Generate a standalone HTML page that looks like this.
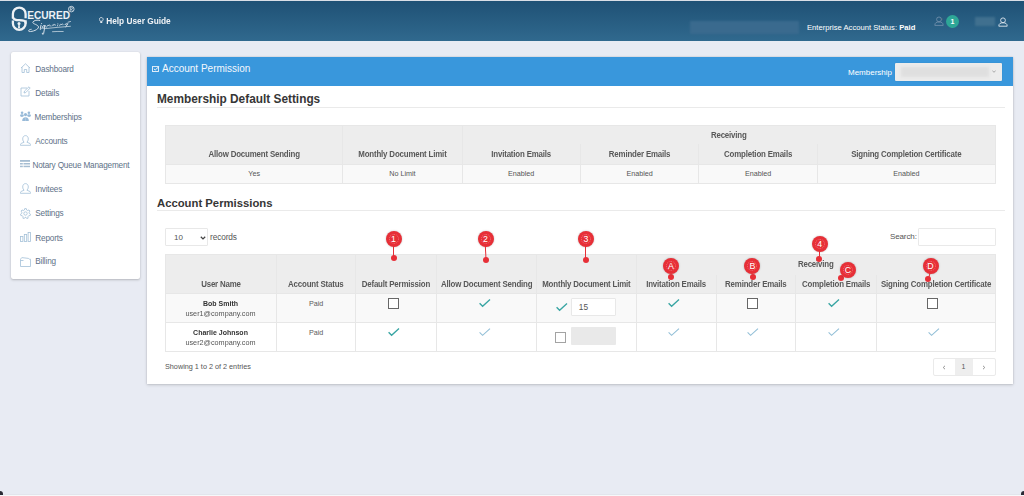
<!DOCTYPE html>
<html><head><meta charset="utf-8">
<style>
*{margin:0;padding:0;box-sizing:border-box}
html,body{width:1024px;height:496px;overflow:hidden}
body{background:#e8ebf3;font-family:"Liberation Sans",sans-serif;position:relative;color:#555}
.abs{position:absolute}
.hdr{left:0;top:0;width:1024px;height:41px;background:linear-gradient(#1f5175,#30698e);border-top:1px solid #d9dee6}
.wt{color:#fff;white-space:nowrap}
.side{left:11px;top:52px;width:129px;height:226.5px;background:#fff;border-radius:2px;box-shadow:0 1px 2.5px rgba(0,0,0,.22),0 0 1px rgba(0,0,0,.12)}
.mi{position:absolute;margin-top:0.8px;left:24.3px;font-size:8.2px;letter-spacing:-0.18px;color:#607187;white-space:nowrap}
.ico{position:absolute;left:9px}
.card{left:147px;top:57px;width:866px;height:327px;background:#fff;box-shadow:0 1px 3px rgba(0,0,0,.17),0 0 1.5px rgba(0,0,0,.14)}
.bar{left:0;top:0;width:866px;height:28.7px;background:#3997dc}
.h4{position:absolute;left:10px;font-weight:bold;color:#333;white-space:nowrap}
.uline{position:absolute;left:10px;width:848px;height:1px;background:#eaeaea}
table{border-collapse:collapse;position:absolute;table-layout:fixed}
td,th{border:1px solid #e7e7e7;text-align:center;white-space:nowrap;overflow:visible}
th{background:#ededed;font-weight:bold;color:#585858;font-size:7.9px;letter-spacing:-0.17px;vertical-align:bottom}
td{font-size:7.2px;color:#555;padding-bottom:0.8px}
.marker{position:absolute;width:16px;height:16px;border-radius:50%;background:#e72f37;color:#fff;font-size:8.8px;text-align:center;line-height:16.5px;box-shadow:0 0 2px rgba(0,0,0,.25)}
.marker:after{content:"";position:absolute;left:3px;top:3px;width:10px;height:10px;border-radius:50%;border:0.6px dotted rgba(255,255,255,.3);box-sizing:border-box}
.dot{position:absolute;width:6px;height:6px;border-radius:50%;background:#e72f37}
.stem{position:absolute;width:1.2px;background:#e72f37}
.t{display:inline-block;transform:scaleY(1.13);transform-origin:50% 80%}
.cb{position:absolute;width:11px;height:11px;border:1.5px solid #666;background:#fff}
</style></head><body>

<div class="abs" style="left:0;top:494px;width:1024px;height:1px;background:#e2e5ec"></div>
<div class="abs" style="left:0;top:495px;width:1024px;height:1px;background:#f7f8fa"></div>
<div class="abs" style="left:0;top:491px;width:3px;height:4px;background:#2a2a35;border-radius:0 3px 0 0;filter:blur(0.5px)"></div>
<div class="abs" style="left:1021px;top:491px;width:3px;height:4px;background:#2a2a35;border-radius:3px 0 0 0;filter:blur(0.5px)"></div>
<div class="abs" style="left:0;top:1px;width:3px;height:2px;background:#5a3a30;filter:blur(0.4px)"></div>
<!-- header -->
<div class="abs hdr"></div>

<!-- logo -->
<svg class="abs" style="left:8px;top:2px" width="72" height="36" viewBox="0 0 72 36">
  <g fill="none" stroke="#edf1f5" stroke-width="2.3">
    <path d="M4.9 16.5 V11.9 A6.35 6.35 0 0 1 17.6 11.9 V16.3"/>
    <path d="M17.6 18.2 V21.4 A6.35 6.35 0 0 1 4.9 21.4 V18.6"/>
    <path d="M5 15.2 C5.6 17.6 8 18.2 11 18.2 C15.5 18.2 17.6 18.6 17.6 21.5"/>
  </g>
  <circle cx="11" cy="21.6" r="1.5" fill="#edf1f5"/>
  <path d="M10.4 22 H11.6 L12 25.9 H10 Z" fill="#edf1f5"/>
  <text x="19.2" y="17.4" font-family="Liberation Sans" font-weight="bold" font-size="10.4" fill="#edf1f5" textLength="42.8" lengthAdjust="spacingAndGlyphs">ECURED</text>
  <circle cx="63.3" cy="7.1" r="2.8" fill="none" stroke="#e6ebf1" stroke-width="0.8"/>
  <path d="M62.4 8.9 V5.4 H63.6 A0.9 0.9 0 0 1 63.6 7.2 H62.4 M63.4 7.2 L64.3 8.9" fill="none" stroke="#e6ebf1" stroke-width="0.6"/>
  <g fill="none" stroke="#dde6ee" stroke-width="0.95" stroke-linecap="round">
    <path d="M31.8 18.4 C29.8 17.6 25.4 18.4 24.8 20.2 C24.3 22 30.4 22.6 30.5 25 C30.6 27.6 24.2 29.9 21.3 29.5 C19.6 29.1 21 27.4 23.2 27.3"/>
    <path d="M33 23.2 L32.2 27.2 C32.1 27.8 32.8 27.6 33.4 26.8"/>
    <path d="M37.2 23.6 C35.8 22.8 33.9 24.4 34.3 25.9 C34.7 27 36.2 26.4 37 23.6 L35.6 31.6 C35.3 33 33.9 32.6 34.3 31.2"/>
    <path stroke-width="0.75" d="M38.6 25.2 C39.6 22.6 40.6 22.4 40.4 24 C41.3 22.4 42.5 22.4 42.2 24.2 M44 24 C44.8 22 45.8 22 45.6 23.4 C46.4 21.8 47.5 21.8 47.3 23.4 M49.8 22.8 L49.4 24 M49.9 21.6 L50 21.7 M51.6 23.8 C52.4 21.6 53.4 21.4 53.2 23 C54 21.4 55.2 21.4 55 22.8 M57 22.4 C58 21 60 21 59.6 22.4 C59.2 23.6 57.4 23.6 57.6 22.4 M59.8 21.8 L57.8 25 M60 20.2 L62.5 19.5"/>
  </g>
  <circle cx="33.6" cy="21.5" r="0.55" fill="#dde6ee"/>
  <path d="M37 26.6 Q50 25.2 62.4 24.3 M44.5 29.7 Q50 29.3 55.2 29.5" stroke="#dde6ee" stroke-width="0.7" fill="none" stroke-linecap="round"/>
</svg>

<!-- help -->
<svg class="abs" style="left:99px;top:17.3px" width="4.5" height="6.5" viewBox="0 0 5 7"><path d="M2.5 0.5 A2 2 0 0 0 0.9 3.8 L1.4 4.6 H3.6 L4.1 3.8 A2 2 0 0 0 2.5 0.5 Z" fill="none" stroke="#f0f3f6" stroke-width="0.9"/><rect x="1.4" y="4.9" width="2.2" height="1.6" fill="#f0f3f6"/></svg>
<div class="abs wt" style="left:106.2px;top:16.3px;font-size:8.3px;font-weight:bold;color:#f0f3f6;transform:scaleY(1.08)">Help User Guide</div>

<!-- right header -->
<div class="abs" style="left:690px;top:20.5px;width:109px;height:13.5px;background:#3a6a8e;filter:blur(1.2px)"></div>
<div class="abs wt" style="left:807px;top:23px;font-size:7.65px">Enterprise Account Status: <b>Paid</b></div>
<svg class="abs" style="left:934px;top:16px" width="10" height="10" viewBox="0 0 10 10"><g fill="none" stroke="#7593ae" stroke-width="0.8"><circle cx="5" cy="3.4" r="2.4"/><path d="M0.8 9.4 C0.8 6.6 2.6 6 5 6 C7.4 6 9.2 6.6 9.2 9.4 Z"/></g><circle cx="8" cy="3" r="0.5" fill="#c08060" fill-opacity=".6"/></svg>
<div class="abs" style="left:946px;top:14.8px;width:13px;height:13px;border-radius:50%;background:#2ea797;color:#fff;font-size:7px;font-weight:bold;text-align:center;line-height:13px">1</div><div class="abs" style="left:951px;top:26.5px;width:0;height:0;border-left:1.5px solid transparent;border-right:1.5px solid transparent;border-top:1.5px solid #2ea797"></div>
<div class="abs" style="left:975px;top:17px;width:20px;height:9px;background:#40708f;filter:blur(1px)"></div>
<svg class="abs" style="left:997.5px;top:17px" width="10" height="10" viewBox="0 0 10 10"><g fill="none" stroke="#dfe6ee" stroke-width="0.9"><circle cx="5" cy="3.3" r="2.4"/><path d="M0.8 9.2 C0.8 6.4 2.6 5.8 5 5.8 C7.4 5.8 9.2 6.4 9.2 9.2 Z"/></g></svg>

<!-- sidebar -->
<div class="abs side">
  <svg class="ico" style="top:11px" width="11" height="10" viewBox="0 0 11 10"><path d="M1 5 L5.5 0.8 L10 5 M2 4.2 V9.5 H4.3 V6.5 H6.7 V9.5 H9 V4.2" fill="none" stroke="#a3c0d8" stroke-width="0.8"/></svg>
  <div class="mi" style="top:12px">Dashboard</div>
  <svg class="ico" style="top:34px" width="11" height="11" viewBox="0 0 11 11"><path d="M7 2 H1 V10 H9 V5 M4 7 L4.5 5 L9 0.8 L10.2 2 L5.8 6.5 Z" fill="none" stroke="#a3c0d8" stroke-width="0.8"/></svg>
  <div class="mi" style="top:36px">Details</div>
  <svg class="ico" style="top:58.7px;left:8.6px" width="11" height="10.5" viewBox="0 0 11 10.5"><g fill="#98bad8"><circle cx="2.1" cy="1.8" r="1.3"/><circle cx="8.9" cy="1.8" r="1.3"/><ellipse cx="1.9" cy="4.6" rx="1.9" ry="1.3"/><ellipse cx="9.1" cy="4.6" rx="1.9" ry="1.3"/><circle cx="5.5" cy="3.6" r="1.6"/><path d="M2.2 10.2 Q2 6.2 5.5 6.2 Q9 6.2 8.8 10.2 Z"/></g><g fill="none" stroke="#fff" stroke-width="0.35" stroke-opacity="0.6"><path d="M5.5 6.6 V10.2"/></g></svg>
  <div class="mi" style="top:60px;left:23.6px">Memberships</div>
  <svg class="ico" style="top:83px;left:9.2px" width="11" height="11" viewBox="0 0 11 11"><path d="M5.5 0.6 C3.6 0.6 2.7 2.2 2.7 4 C2.7 5.5 3.3 6.6 4.1 7.2 L1 8.5 C0.6 8.7 0.4 9.1 0.4 9.6 V10.3 H10.6 V9.6 C10.6 9.1 10.4 8.7 10 8.5 L6.9 7.2 C7.7 6.6 8.3 5.5 8.3 4 C8.3 2.2 7.4 0.6 5.5 0.6 Z" fill="none" stroke="#a3c0d8" stroke-width="0.8"/></svg>
  <div class="mi" style="top:84px">Accounts</div>
  <svg class="ico" style="top:108px;left:8.9px" width="10" height="8" viewBox="0 0 10 8"><g fill="#a6bdd2"><rect x="0" y="0" width="10" height="1.8"/><rect x="0" y="3" width="2.8" height="1.5"/><rect x="3.5" y="3" width="6.5" height="1.5"/><rect x="0" y="5.7" width="2.8" height="1.5"/><rect x="3.5" y="5.7" width="6.5" height="1.5"/></g></svg>
  <div class="mi" style="top:108px;left:21.5px">Notary Queue Management</div>
  <svg class="ico" style="top:131px;left:9.2px" width="11" height="11" viewBox="0 0 11 11"><path d="M5.5 0.6 C3.6 0.6 2.7 2.2 2.7 4 C2.7 5.5 3.3 6.6 4.1 7.2 L1 8.5 C0.6 8.7 0.4 9.1 0.4 9.6 V10.3 H10.6 V9.6 C10.6 9.1 10.4 8.7 10 8.5 L6.9 7.2 C7.7 6.6 8.3 5.5 8.3 4 C8.3 2.2 7.4 0.6 5.5 0.6 Z" fill="none" stroke="#a3c0d8" stroke-width="0.8"/></svg>
  <div class="mi" style="top:132px">Invitees</div>
  <svg class="ico" style="top:155.5px" width="11" height="11" viewBox="0 0 11 11"><g fill="none" stroke="#a3c0d8" stroke-width="0.8"><circle cx="5.5" cy="5.5" r="1.7"/><path d="M4.7 0.6 H6.3 L6.6 2 L7.8 2.6 L9 1.9 L9.9 3.1 L9.1 4.2 L9.3 5.5 L10.5 6.2 L10.1 7.6 L8.7 7.7 L7.9 8.8 L8.1 10.2 L6.7 10.5 L6 9.3 H5 L4.3 10.5 L2.9 10.2 L3.1 8.8 L2.3 7.7 L0.9 7.6 L0.5 6.2 L1.7 5.5 L1.9 4.2 L1.1 3.1 L2 1.9 L3.2 2.6 L4.4 2 Z"/></g></svg>
  <div class="mi" style="top:156px">Settings</div>
  <svg class="ico" style="top:180px" width="11" height="10" viewBox="0 0 11 10"><g fill="none" stroke="#a3c0d8" stroke-width="0.8"><rect x="0.5" y="4.5" width="2.4" height="5"/><rect x="4.3" y="2.5" width="2.4" height="7"/><rect x="8.1" y="0.5" width="2.4" height="9"/></g></svg>
  <div class="mi" style="top:181px">Reports</div>
  <svg class="ico" style="top:204.5px" width="11" height="10" viewBox="0 0 11 10"><g fill="none" stroke="#a3c0d8" stroke-width="0.8"><path d="M0.5 2.2 L1.8 0.6 L8.5 1.4 L9.2 2.2 H10.5 V9.5 H0.5 Z"/><path d="M0.5 3.5 H3.5"/></g></svg>
  <div class="mi" style="top:204.5px">Billing</div>
</div>

<!-- main card -->
<div class="abs card">
  <div class="abs bar"></div>
  <svg class="abs" style="left:5px;top:8.5px" width="8" height="6" viewBox="0 0 8 6"><rect x="0.5" y="0.6" width="6" height="4.9" fill="none" stroke="#f2f7fc" stroke-width="0.9"/><path d="M1.9 2.8 L3.2 4 L7.2 0.4" fill="none" stroke="#f2f7fc" stroke-width="1"/></svg>
  <div class="abs wt" style="left:15px;top:5.9px;font-size:10px;color:#f4f8fc">Account Permission</div>
  <div class="abs wt" style="left:701px;top:10.5px;font-size:8px">Membership</div>
  <div class="abs" style="left:748px;top:6px;width:107px;height:18px;background:#ececec;border-radius:1px;box-shadow:0 0 1px rgba(0,0,0,.2)"></div>
  <div class="abs" style="left:754px;top:10px;width:88px;height:10px;background:#dfdfdf;filter:blur(1.5px)"></div>
  <svg class="abs" style="left:845px;top:13px" width="4" height="3" viewBox="0 0 4 3"><path d="M0.3 0.5 L2 2.3 L3.7 0.5" fill="none" stroke="#999" stroke-width="0.8"/></svg>

  <div class="h4" style="top:34.5px;font-size:11.85px;color:#363636">Membership Default Settings</div>
  <div class="uline" style="top:50px"></div>

  <table style="left:18px;top:68px;width:830px">
    <colgroup><col style="width:177.3px"><col style="width:119.3px"><col style="width:118.2px"><col style="width:118.6px"><col style="width:118.4px"><col style="width:178.2px"></colgroup>
    <tr style="height:18px"><th rowspan="2" style="padding-bottom:5px"><span class="t">Allow Document Sending</span></th><th rowspan="2" style="padding-bottom:5px"><span class="t">Monthly Document Limit</span></th><th colspan="4" style="vertical-align:middle;border-bottom:none;padding-top:1.4px"><span class="t">Receiving</span></th></tr>
    <tr style="height:21px"><th style="border-top:none;padding-bottom:5px"><span class="t">Invitation Emails</span></th><th style="border-top:none;padding-bottom:5px"><span class="t">Reminder Emails</span></th><th style="border-top:none;padding-bottom:5px"><span class="t">Completion Emails</span></th><th style="border-top:none;padding-bottom:5px"><span class="t">Signing Completion Certificate</span></th></tr>
    <tr style="height:19px;background:#f9f9f9"><td>Yes</td><td>No Limit</td><td>Enabled</td><td>Enabled</td><td>Enabled</td><td>Enabled</td></tr>
  </table>

  <div class="h4" style="top:140px;font-size:11.3px;color:#363636">Account Permissions</div>
  <div class="uline" style="top:153px"></div>

  <div class="abs" style="left:18px;top:171px;width:43px;height:18px;border:1px solid #e8e8e8;border-radius:1px;background:#fff"></div>
  <div class="abs" style="left:27px;top:175.5px;font-size:8px;color:#555">10</div>
  <svg class="abs" style="left:52.5px;top:178.5px" width="6" height="4" viewBox="0 0 6 4"><path d="M0.8 0.8 L3 2.9 L5.2 0.8" fill="none" stroke="#444" stroke-width="1.3"/></svg>
  <div class="abs" style="left:63px;top:174.8px;font-size:8.3px;letter-spacing:-0.12px;color:#555">records</div>

  <div class="abs" style="left:743px;top:174.6px;font-size:8px;letter-spacing:-0.12px;color:#555">Search:</div>
  <div class="abs" style="left:771px;top:171.2px;width:77.6px;height:18.3px;border:1px solid #e9e9e9;border-radius:1px;background:#fff"></div>

  <table style="left:18px;top:197px;width:830px">
    <colgroup><col style="width:111px"><col style="width:78.6px"><col style="width:81.6px"><col style="width:100px"><col style="width:99.4px"><col style="width:80px"><col style="width:79.5px"><col style="width:81.2px"><col style="width:118.7px"></colgroup>
    <tr style="height:20px"><th rowspan="2" style="padding-bottom:4.3px"><span class="t">User Name</span></th><th rowspan="2" style="padding-bottom:4.3px"><span class="t">Account Status</span></th><th rowspan="2" style="padding-bottom:4.3px"><span class="t">Default Permission</span></th><th rowspan="2" style="padding-bottom:4.3px"><span class="t">Allow Document Sending</span></th><th rowspan="2" style="padding-bottom:4.3px"><span class="t">Monthly Document Limit</span></th><th colspan="4" style="border-bottom:none;vertical-align:bottom;padding-bottom:6px"><span class="t">Receiving</span></th></tr>
    <tr style="height:19px"><th style="border-top:none;padding-bottom:4.3px"><span class="t">Invitation Emails</span></th><th style="border-top:none;padding-bottom:4.3px"><span class="t">Reminder Emails</span></th><th style="border-top:none;padding-bottom:4.3px"><span class="t">Completion Emails</span></th><th style="border-top:none;padding-bottom:4.3px"><span class="t">Signing Completion Certificate</span></th></tr>
    <tr style="height:29px;background:#f9f9f9"><td></td><td></td><td></td><td></td><td></td><td></td><td></td><td></td><td></td></tr>
    <tr style="height:29px;background:#fff"><td></td><td></td><td></td><td></td><td></td><td></td><td></td><td></td><td></td></tr>
  </table>


  <!-- row content -->
  <div class="abs" style="left:18px;top:242.7px;width:111px;text-align:center;font-size:7px;font-weight:bold;color:#333;transform:scaleY(1.1)">Bob Smith</div>
  <div class="abs" style="left:18px;top:252px;width:111px;text-align:center;font-size:7.25px;color:#555;transform:scaleY(1.08)">user1@company.com</div>
  <div class="abs" style="left:18px;top:271.8px;width:111px;text-align:center;font-size:7px;font-weight:bold;color:#333;transform:scaleY(1.1)">Charlie Johnson</div>
  <div class="abs" style="left:18px;top:281.1px;width:111px;text-align:center;font-size:7.25px;color:#555;transform:scaleY(1.08)">user2@company.com</div>
  <div class="abs" style="left:129.9px;top:241.7px;width:78.6px;text-align:center;font-size:7.2px;color:#5c5c5c">Paid</div>
  <div class="abs" style="left:129.9px;top:270.5px;width:78.6px;text-align:center;font-size:7.2px;color:#5c5c5c">Paid</div>
  <div class="abs" style="left:18px;top:305.2px;font-size:7.25px;color:#555">Showing 1 to 2 of 2 entries</div>
</div>

<div class="abs" style="left:387.8px;top:298px;width:11px;height:11px;border:1.25px solid #676767;background:#fff"></div>
<svg class="abs" style="left:479px;top:298.5px" width="12" height="9" viewBox="0 0 12 9"><path d="M0.6 4.3 L3.6 7.3 L11 0.6" fill="none" stroke="#38a5a3" stroke-width="1.35"/></svg>
<svg class="abs" style="left:555.5px;top:303px" width="12" height="9" viewBox="0 0 12 9"><path d="M0.6 4.3 L3.6 7.3 L11 0.6" fill="none" stroke="#38a5a3" stroke-width="1.35"/></svg>
<div class="abs" style="left:570.8px;top:298.3px;width:45.3px;height:18px;background:#fff;border:1px solid #e8e8e8;border-radius:1px"></div>
<div class="abs" style="left:578.8px;top:302.4px;font-size:8.3px;color:#555">15</div>
<svg class="abs" style="left:667.5px;top:298.5px" width="12" height="9" viewBox="0 0 12 9"><path d="M0.6 4.3 L3.6 7.3 L11 0.6" fill="none" stroke="#38a5a3" stroke-width="1.35"/></svg>
<div class="abs" style="left:747px;top:298px;width:11px;height:11px;border:1.25px solid #676767;background:#fff"></div>
<svg class="abs" style="left:827.5px;top:298.5px" width="12" height="9" viewBox="0 0 12 9"><path d="M0.6 4.3 L3.6 7.3 L11 0.6" fill="none" stroke="#38a5a3" stroke-width="1.35"/></svg>
<div class="abs" style="left:927px;top:298px;width:11px;height:11px;border:1.25px solid #676767;background:#fff"></div>
<svg class="abs" style="left:388px;top:327.5px" width="12" height="9" viewBox="0 0 12 9"><path d="M0.6 4.3 L3.6 7.3 L11 0.6" fill="none" stroke="#38a5a3" stroke-width="1.35"/></svg>
<svg class="abs" style="left:479px;top:327.5px" width="12" height="9" viewBox="0 0 12 9"><path d="M0.6 4.3 L3.6 7.3 L11 0.6" fill="none" stroke="#92bfd7" stroke-width="1.1"/></svg>
<div class="abs" style="left:555px;top:332px;width:11px;height:11px;border:1.1px solid #a3a3a3;background:#fff"></div>
<div class="abs" style="left:570.8px;top:327px;width:45.3px;height:18px;background:#e9e9e9;border-radius:1px"></div>
<svg class="abs" style="left:667.5px;top:327.5px" width="12" height="9" viewBox="0 0 12 9"><path d="M0.6 4.3 L3.6 7.3 L11 0.6" fill="none" stroke="#92bfd7" stroke-width="1.1"/></svg>
<svg class="abs" style="left:747px;top:327.5px" width="12" height="9" viewBox="0 0 12 9"><path d="M0.6 4.3 L3.6 7.3 L11 0.6" fill="none" stroke="#92bfd7" stroke-width="1.1"/></svg>
<svg class="abs" style="left:827.5px;top:327.5px" width="12" height="9" viewBox="0 0 12 9"><path d="M0.6 4.3 L3.6 7.3 L11 0.6" fill="none" stroke="#92bfd7" stroke-width="1.1"/></svg>
<svg class="abs" style="left:927.5px;top:327.5px" width="12" height="9" viewBox="0 0 12 9"><path d="M0.6 4.3 L3.6 7.3 L11 0.6" fill="none" stroke="#92bfd7" stroke-width="1.1"/></svg>
<div class="abs" style="left:932.8px;top:358px;width:63px;height:18px;border:1px solid #eaeaea;border-radius:2px;background:#fff;overflow:hidden"><div class="abs" style="left:21.5px;top:0;width:18px;height:16px;background:#eeeeee"></div></div>
<svg class="abs" style="left:942px;top:364.5px" width="4" height="5" viewBox="0 0 4 5"><path d="M3 0.8 L1.2 2.5 L3 4.2" fill="none" stroke="#888" stroke-width="0.9"/></svg>
<div class="abs" style="left:961.5px;top:362.5px;font-size:7px;color:#555">1</div>
<svg class="abs" style="left:982px;top:364.5px" width="4" height="5" viewBox="0 0 4 5"><path d="M1 0.8 L2.8 2.5 L1 4.2" fill="none" stroke="#888" stroke-width="0.9"/></svg>
<div class="stem" style="left:392.75px;top:238.5px;height:19.0px"></div>
<div class="dot" style="left:391px;top:254.5px"></div>
<div class="marker" style="left:385.5px;top:230.5px">1</div>
<div class="stem" style="left:485.4px;top:238.5px;height:21.0px;transform:rotate(-3deg)"></div>
<div class="dot" style="left:483px;top:256.5px"></div>
<div class="marker" style="left:477.5px;top:230.8px">2</div>
<div class="stem" style="left:585.25px;top:238.5px;height:21.0px"></div>
<div class="dot" style="left:582.5px;top:256.5px"></div>
<div class="marker" style="left:578px;top:230.5px">3</div>
<div class="stem" style="left:818.9px;top:244px;height:15px"></div>
<div class="dot" style="left:815.5px;top:256px"></div>
<div class="marker" style="left:811.8px;top:236px">4</div>
<div class="dot" style="left:668.4px;top:274.2px"></div>
<div class="marker" style="left:663px;top:258px">A</div>
<div class="dot" style="left:749.7px;top:274.2px"></div>
<div class="marker" style="left:744.4px;top:258px">B</div>
<div class="dot" style="left:838px;top:274.5px"></div>
<div class="marker" style="left:840px;top:262px">C</div>
<div class="stem" style="left:928.6px;top:272px;height:6px;transform:rotate(15deg)"></div>
<div class="dot" style="left:925px;top:276.4px"></div>
<div class="marker" style="left:922.5px;top:258px">D</div>
</body></html>
